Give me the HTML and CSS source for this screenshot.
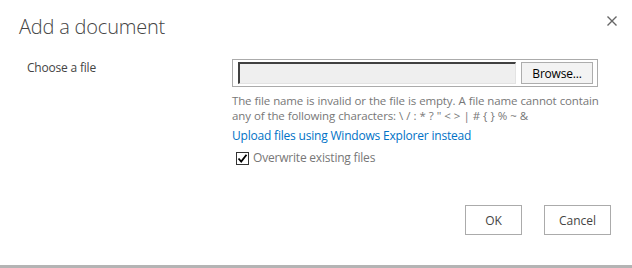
FILE: index.html
```html
<!DOCTYPE html>
<html lang="en">
<head>
    <meta charset="UTF-8">
    <title>Add a document</title>
    <link rel="stylesheet" href="styles.css">
</head>
<body>

    <div class="dialog">
        <header class="dialog-header">
            <h1>Add a document</h1>
            <button type="button" class="close-btn" aria-label="Close">
                <svg width="10" height="10" viewBox="0 0 10 10">
                    <path d="M0.5 0.5 L9.5 9.5 M9.5 0.5 L0.5 9.5" stroke="#666" stroke-width="1.4" />
                </svg>
            </button>
        </header>

        <div class="form-row">
            <div class="label">Choose a file</div>
            <div class="field">
                <div class="file-box">
                    <div class="file-text"></div>
                    <button type="button" class="browse-btn">Browse...</button>
                </div>
                <div class="help-text">
                    The file name is invalid or the file is empty. A file name cannot contain<br>
                    any of the following characters: \ / : * ? " &lt; &gt; | # { } % ~ &amp;
                </div>
                <a href="#" class="upload-link">Upload files using Windows Explorer instead</a>
                <label class="overwrite">
                    <span class="check-box">
                        <svg width="11" height="11" viewBox="0 0 11 11">
                            <path d="M1.5 5.5 L4.2 8.5 L9.5 1.8" fill="none" stroke="#000" stroke-width="1.8" />
                        </svg>
                    </span>
                    Overwrite existing files
                </label>
            </div>
        </div>

        <div class="buttons">
            <button type="button" class="dlg-btn ok-btn">OK</button>
            <button type="button" class="dlg-btn cancel-btn">Cancel</button>
        </div>
    </div>

</body>
</html>
```

FILE: styles.css
```css
body {
    margin: 0;
    font-family: 'Open Sans', 'Liberation Sans', sans-serif;
    font-size: 12px;
    color: #444;
    background-color: #fff;
}

/* Dialog frame */
.dialog {
    height: 265px;
    border-bottom: 3px solid #b4b4b4;
    display: flex;
    flex-direction: column;
}

/* Header */
.dialog-header {
    display: flex;
    justify-content: space-between;
    align-items: flex-start;
    padding: 13px 15px 0 19px;
}

.dialog-header h1 {
    margin: 0;
    font-size: 20px;
    font-weight: 300;
    line-height: 28px;
    color: #444;
    letter-spacing: -0.2px;
}

.close-btn {
    margin-top: 1px;
    padding: 0;
    border: none;
    background: none;
    width: 10px;
    height: 10px;
    cursor: pointer;
}

/* Form row */
.form-row {
    display: flex;
    margin-top: 18px;
}

.label {
    width: 205px;
    padding-left: 27px;
    line-height: 18px;
    letter-spacing: -0.2px;
}

.field {
    width: 366px;
}

.file-box {
    display: flex;
    gap: 5px;
    border: 1px solid #ababab;
    padding: 2px 4px 2px 5px;
    height: 22px;
}

.file-text {
    flex: 1;
    background-color: #efefef;
    border-top: 2px solid #404040;
    border-left: 2px solid #404040;
    border-right: 1px solid #e3e3e3;
    border-bottom: 1px solid #e3e3e3;
}

.browse-btn {
    width: 72px;
    border: 1px solid #adadad;
    background-color: #f3f3f3;
    font-family: inherit;
    font-size: 12px;
    letter-spacing: -0.2px;
    color: #000;
    padding: 0;
}

.help-text {
    margin-top: 6px;
    font-size: 11.5px;
    line-height: 15px;
    color: #777;
    letter-spacing: -0.15px;
    word-spacing: 0.3px;
    white-space: nowrap;
}

.upload-link {
    display: block;
    margin-top: 4px;
    color: #0072c6;
    text-decoration: none;
    line-height: 18px;
    letter-spacing: -0.2px;
}

.overwrite {
    display: flex;
    align-items: center;
    gap: 4px;
    margin-top: 5px;
    margin-left: 4px;
    color: #777;
    letter-spacing: -0.2px;
    line-height: 16px;
}

.check-box {
    display: flex;
    align-items: center;
    justify-content: center;
    width: 11px;
    height: 11px;
    border: 1px solid #333;
    background-color: #fff;
}

/* Buttons */
.buttons {
    display: flex;
    justify-content: flex-end;
    gap: 22px;
    margin-top: auto;
    padding: 0 21px 30px 0;
}

.dlg-btn {
    height: 30px;
    border: 1px solid #ababab;
    background-color: #fff;
    font-family: inherit;
    font-size: 12px;
    color: #444;
    cursor: pointer;
}

.ok-btn {
    width: 57px;
}

.cancel-btn {
    width: 67px;
}
```
